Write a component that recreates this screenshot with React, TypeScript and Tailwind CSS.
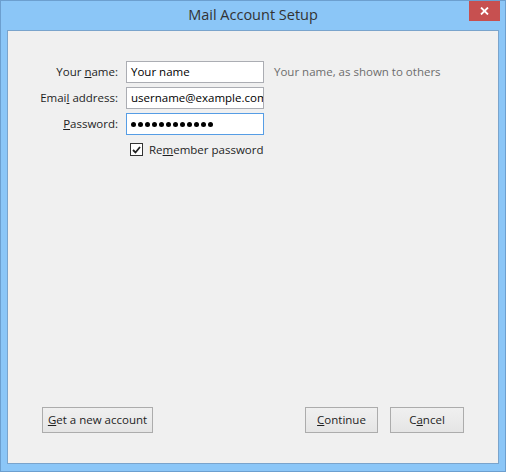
import React from "react"

const font = { fontFamily: '"Open Sans", "Noto Sans", sans-serif' }

function Field({
  label,
  value,
  focused,
  dots,
}: {
  label: React.ReactNode
  value: string
  focused?: boolean
  dots?: boolean
}) {
  return (
    <>
      <div className="flex h-[22px] items-center justify-end whitespace-nowrap text-[11.5px] text-[#1e1e1e]">{label}</div>
      <div
        className={`flex h-[22px] w-[138px] items-center overflow-hidden whitespace-nowrap border bg-white pl-[4px] text-[11.5px] text-black ${
          focused ? "border-[#569de5]" : "border-[#abadb3]"
        }`}
      >
        {dots ? (
          <span className="flex gap-[2px]" aria-label={value}>
            {Array.from({ length: 12 }).map((_, i) => (
              <span key={i} className="h-[5px] w-[5px] rounded-full bg-black" />
            ))}
          </span>
        ) : (
          value
        )}
      </div>
    </>
  )
}

export default function App() {
  return (
    <div className="h-[472px] w-[506px] border border-[#6c9fcf] bg-[#8bc6f7]" style={font}>
      <div className="relative flex h-[29px] items-center justify-center pb-[2px]">
        <span className="text-[14.5px] text-[#333333]">Mail Account Setup</span>
        <button className="absolute right-[5px] top-0 flex h-[20px] w-[31px] items-center justify-center bg-[#c75050]">
          <svg width="9" height="8" viewBox="0 0 9 8">
            <path d="M1 0.5 L8 7.5 M8 0.5 L1 7.5" stroke="white" strokeWidth="1.8" />
          </svg>
        </button>
      </div>
      <div className="mx-[6px] flex h-[434px] flex-col border border-[#7aa4cc] bg-[#f0f0f0]">
        <div className="flex items-start pl-[34px] pt-[30px]">
          <div className="grid grid-cols-[76px_138px] gap-x-[8px] gap-y-[4px]">
            <Field
              label={
                <span>
                  Your <u>n</u>ame:
                </span>
              }
              value="Your name"
            />
            <Field
              label={
                <span>
                  Emai<u>l</u> address:
                </span>
              }
              value="username@example.com"
            />
            <Field
              label={
                <span>
                  <u>P</u>assword:
                </span>
              }
              value="●●●●●●●●●●●●"
              focused
              dots
            />
            <div />
            <label className="mt-[2px] flex items-center gap-[6px] whitespace-nowrap pl-[4px] text-[11.5px] text-[#1e1e1e]">
              <span className="flex h-[13px] w-[13px] items-center justify-center border border-[#333333] bg-white">
                <svg width="9" height="8" viewBox="0 0 9 8">
                  <path d="M1 4 L3.5 6.5 L8 1" fill="none" stroke="#222" strokeWidth="1.8" />
                </svg>
              </span>
              <span>
                Re<u>m</u>ember password
              </span>
            </label>
          </div>
          <div className="ml-[10px] flex h-[22px] items-center whitespace-nowrap text-[11.5px] text-[#6d6d6d]">
            Your name, as shown to others
          </div>
        </div>
        <div className="mt-auto flex items-center px-[34px] pb-[30px]">
          <button className="h-[26px] w-[111px] border border-[#acacac] bg-gradient-to-b from-[#f0f0f0] to-[#e5e5e5] text-[11.5px] text-[#1e1e1e]">
            <u>G</u>et a new account
          </button>
          <button className="ml-auto h-[26px] w-[73px] border border-[#acacac] bg-gradient-to-b from-[#f0f0f0] to-[#e5e5e5] text-[11.5px] text-[#1e1e1e]">
            <u>C</u>ontinue
          </button>
          <button className="ml-[12px] h-[26px] w-[74px] border border-[#acacac] bg-gradient-to-b from-[#f0f0f0] to-[#e5e5e5] text-[11.5px] text-[#1e1e1e]">
            C<u>a</u>ncel
          </button>
        </div>
      </div>
    </div>
  )
}
